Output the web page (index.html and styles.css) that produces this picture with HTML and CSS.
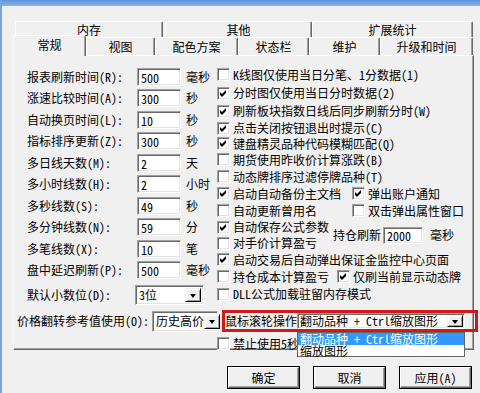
FILE: index.html
```html
<!DOCTYPE html>
<html lang="zh-CN">
<head>
  <meta charset="UTF-8">
  <title>系统设置</title>
  <link rel="stylesheet" href="styles.css">
</head>
<body>
  <div class="window">
    <div class="titlebar"></div>
    <div class="dialog">
      <div class="tabs">
        <div class="tabrow back">
          <div class="tab t-mem">内存</div>
          <div class="tab t-other">其他</div>
          <div class="tab t-ext">扩展统计</div>
        </div>
        <div class="tabrow front">
          <div class="tab active t-gen">常规</div>
          <div class="tab t-view">视图</div>
          <div class="tab t-color">配色方案</div>
          <div class="tab t-status">状态栏</div>
          <div class="tab t-maint">维护</div>
          <div class="tab t-upg">升级和时间</div>
        </div>
      </div>

      <div class="panel">
        <div class="cols">
          <div class="left">
            <div class="field"><span class="lbl">报表刷新时间(R):</span><span class="input">500</span><span class="unit">毫秒</span></div>
            <div class="field"><span class="lbl">涨速比较时间(A):</span><span class="input">300</span><span class="unit">秒</span></div>
            <div class="field"><span class="lbl">自动换页时间(L):</span><span class="input">10</span><span class="unit">秒</span></div>
            <div class="field"><span class="lbl">指标排序更新(Z):</span><span class="input">300</span><span class="unit">秒</span></div>
            <div class="field"><span class="lbl">多日线天数(M):</span><span class="input">2</span><span class="unit">天</span></div>
            <div class="field"><span class="lbl">多小时线数(H):</span><span class="input">2</span><span class="unit">小时</span></div>
            <div class="field"><span class="lbl">多秒线数(S):</span><span class="input">49</span><span class="unit">秒</span></div>
            <div class="field"><span class="lbl">多分钟线数(N):</span><span class="input">59</span><span class="unit">分</span></div>
            <div class="field"><span class="lbl">多笔线数(X):</span><span class="input">10</span><span class="unit">笔</span></div>
            <div class="field"><span class="lbl">盘中延迟刷新(P):</span><span class="input">500</span><span class="unit">毫秒</span></div>
            <div class="field decimals">
              <span class="lbl short">默认小数位(D):</span>
              <span class="combo c-dec"><span class="val">3位</span><span class="drop"></span></span>
            </div>
          </div>

          <div class="right">
            <div class="chk h19"><span class="box"></span>K线图仅使用当日分笔、1分数据(1)</div>
            <div class="chk h18"><span class="box"><svg viewBox="0 0 11 11"><polygon points="2,4 4,6 8,2 8,5 4,9 2,7"/></svg></span>分时图仅使用当日分时数据(2)</div>
            <div class="chk h18"><span class="box"><svg viewBox="0 0 11 11"><polygon points="2,4 4,6 8,2 8,5 4,9 2,7"/></svg></span>刷新板块指数日线后同步刷新分时(W)</div>
            <div class="chk h16"><span class="box"><svg viewBox="0 0 11 11"><polygon points="2,4 4,6 8,2 8,5 4,9 2,7"/></svg></span>点击关闭按钮退出时提示(C)</div>
            <div class="chk h15"><span class="box"><svg viewBox="0 0 11 11"><polygon points="2,4 4,6 8,2 8,5 4,9 2,7"/></svg></span>键盘精灵品种代码模糊匹配(Q)</div>
            <div class="chk"><span class="box"></span>期货使用昨收价计算涨跌(B)</div>
            <div class="chk"><span class="box"></span>动态牌排序过滤停牌品种(T)</div>
            <div class="pair">
              <div class="chk first"><span class="box"><svg viewBox="0 0 11 11"><polygon points="2,4 4,6 8,2 8,5 4,9 2,7"/></svg></span>启动自动备份主文档</div>
              <div class="chk"><span class="box"><svg viewBox="0 0 11 11"><polygon points="2,4 4,6 8,2 8,5 4,9 2,7"/></svg></span>弹出账户通知</div>
            </div>
            <div class="pair">
              <div class="chk first"><span class="box"></span>自动更新曾用名</div>
              <div class="chk"><span class="box"></span>双击弹出属性窗口</div>
            </div>
            <div class="group">
              <div class="sub">
                <div class="chk h16"><span class="box"><svg viewBox="0 0 11 11"><polygon points="2,4 4,6 8,2 8,5 4,9 2,7"/></svg></span>自动保存公式参数</div>
                <div class="chk h16"><span class="box"></span>对手价计算盈亏</div>
              </div>
              <div class="refresh">
                <span>持仓刷新</span><span class="input small">2000</span><span class="unit2">毫秒</span>
              </div>
            </div>
            <div class="chk"><span class="box"><svg viewBox="0 0 11 11"><polygon points="2,4 4,6 8,2 8,5 4,9 2,7"/></svg></span>启动交易后自动弹出保证金监控中心页面</div>
            <div class="pair h18">
              <div class="chk first narrow"><span class="box"></span>持仓成本计算盈亏</div>
              <div class="chk"><span class="box"><svg viewBox="0 0 11 11"><polygon points="2,4 4,6 8,2 8,5 4,9 2,7"/></svg></span>仅刷当前显示动态牌</div>
            </div>
            <div class="chk h18"><span class="box"></span>DLL公式加载驻留内存模式</div>
          </div>
        </div>

        <div class="wheel-row">
          <span class="lbl wide">价格翻转参考值使用(O):</span>
          <span class="combo c-price"><span class="val">历史高价</span><span class="drop"></span></span>
          <div class="mark">
            <span class="wheel-lbl">鼠标滚轮操作:</span>
            <span class="combo c-wheel"><span class="val">翻动品种 + Ctrl缩放图形</span><span class="drop"></span></span>
            <div class="droplist">
              <div class="item sel">翻动品种 + Ctrl缩放图形</div>
              <div class="item">缩放图形</div>
            </div>
          </div>
        </div>

        <div class="ban-row">
          <div class="chk"><span class="box"></span>禁止使用5秒</div>
        </div>
      </div>

      <div class="buttons">
        <button class="btn">确定</button>
        <button class="btn">取消</button>
        <button class="btn">应用(A)</button>
      </div>
    </div>
  </div>
</body>
</html>
```

FILE: styles.css
```css
body {
  margin: 0;
  background: #f0f0f0;
  color: #000;
  font-family: "Noto Sans Mono CJK SC", "Noto Sans CJK SC", sans-serif;
  font-size: 12px;
  line-height: 12px;
}
.window {
  border-left: 2px solid #75a4e2;
  height: 393px;
  box-sizing: border-box;
  overflow: hidden;
}
.titlebar {
  height: 6px;
  background: linear-gradient(#5d93dc, #8ab3ea);
}
.dialog {
  padding-left: 11px;
}

/* tabs */
.tabs {
  margin-top: 15px;
  width: 461px;
}
.tabrow {
  display: flex;
}
.tab {
  box-sizing: border-box;
  background: #f0f0f0;
  border-top: 1px solid #fff;
  border-left: 1px solid #fff;
  border-right: 1px solid #696969;
  box-shadow: inset -1px 0 #a0a0a0;
  border-radius: 2px 2px 0 0;
  display: flex;
  align-items: center;
  justify-content: center;
}
.back {
  margin-left: 2px;
  height: 16px;
}
.back .tab {
  height: 16px;
  padding-top: 1px;
}
.t-mem { width: 148px; margin-right: 2px; }
.t-other { width: 147px; }
.t-ext { width: 161px; }
.front {
  height: 18px;
  position: relative;
}
.front .tab {
  height: 18px;
  padding-top: 1px;
}
.front .active {
  height: 21px;
  margin-top: -2px;
  position: relative;
  z-index: 2;
  padding-bottom: 3px;
}
.t-gen { width: 73px; }
.t-view { width: 69px; }
.t-color { width: 83px; }
.t-status { width: 71px; }
.t-maint { width: 71px; }
.t-upg { width: 93px; }

/* panel */
.panel {
  box-sizing: border-box;
  width: 461px;
  height: 295px;
  border: 1px solid;
  border-color: #fff #696969 #696969 #fff;
  box-shadow: inset -1px -1px #a0a0a0;
  padding: 10px 0 0 3px;
}
.cols {
  display: flex;
}
.left {
  margin-left: 10px;
  width: 190px;
  flex: none;
}
.field {
  height: 21.5px;
  display: flex;
  align-items: center;
}
.lbl {
  width: 110px;
  white-space: nowrap;
  flex: none;
}
.lbl.short {
  width: 108px;
}
.lbl.wide {
  width: 135px;
}
.input {
  box-sizing: border-box;
  width: 44px;
  height: 18px;
  background: #fff;
  border: 1px solid;
  border-color: #a0a0a0 #fff #fff #a0a0a0;
  box-shadow: inset 1px 1px #696969, inset -1px -1px #e3e3e3;
  padding: 3px 0 0 3px;
  flex: none;
}
.input.small {
  width: 40px;
  height: 17px;
  padding-top: 2px;
  margin-left: 2px;
}
.unit {
  margin-left: 5px;
  white-space: nowrap;
}
.decimals {
  margin-top: 3px;
  height: 22px;
}

/* combo boxes */
.combo {
  box-sizing: border-box;
  background: #fff;
  border: 1px solid;
  border-color: #a0a0a0 #fff #fff #a0a0a0;
  box-shadow: inset 1px 1px #696969, inset -1px -1px #e3e3e3;
  display: flex;
  align-items: center;
  justify-content: space-between;
  padding: 2px;
  flex: none;
}
.combo .val {
  padding-left: 1px;
  white-space: nowrap;
}
.drop {
  box-sizing: border-box;
  width: 16px;
  height: 100%;
  background: #f0f0f0;
  border: 1px solid;
  border-color: #f0f0f0 #000 #000 #f0f0f0;
  box-shadow: inset 1px 1px #fff, inset -1px -1px #a0a0a0;
  position: relative;
  flex: none;
}
.drop::after {
  content: "";
  position: absolute;
  left: 4px;
  top: 5px;
  border-left: 3.5px solid transparent;
  border-right: 3.5px solid transparent;
  border-top: 4px solid #000;
}
.c-dec {
  width: 69px;
  height: 20px;
}
.c-price {
  width: 66px;
  height: 21px;
}
.c-wheel {
  width: 168px;
  height: 16px;
  padding: 1px;
  position: relative;
  z-index: 1;
}
.c-wheel .drop::after {
  top: 4px;
}

/* checkboxes */
.right {
  margin-top: -1px;
}
.chk {
  height: 17px;
  display: flex;
  align-items: center;
  white-space: nowrap;
}
.h19 { height: 19px; }
.h18 { height: 18px; }
.h16 { height: 16px; }
.h15 { height: 15px; }
.box {
  box-sizing: border-box;
  width: 13px;
  height: 13px;
  margin-right: 3px;
  background: #fff;
  border: 1px solid;
  border-color: #a0a0a0 #fff #fff #a0a0a0;
  box-shadow: inset 1px 1px #696969, inset -1px -1px #e3e3e3;
  flex: none;
}
.box svg {
  display: block;
  width: 11px;
  height: 11px;
}
.box polygon {
  fill: #000;
}
.pair {
  display: flex;
  height: 17px;
}
.pair .first {
  width: 135px;
  flex: none;
}
.pair .first.narrow {
  width: 120px;
}
.pair .chk {
  height: 100%;
}
.group {
  display: flex;
  align-items: center;
}
.sub {
  width: 116px;
  flex: none;
}
.refresh {
  display: flex;
  align-items: center;
}
.unit2 {
  margin-left: 7px;
}

/* wheel / price row */
.wheel-row {
  margin-top: 3px;
  height: 24px;
  display: flex;
  align-items: center;
}
.mark {
  position: relative;
  margin-left: 4px;
  width: 256px;
  height: 22px;
  box-sizing: border-box;
  border: 3px solid #d11919;
  display: flex;
  align-items: center;
  flex: none;
}
.wheel-lbl {
  width: 72px;
  white-space: nowrap;
  flex: none;
}
.droplist {
  position: absolute;
  left: 72px;
  top: 19px;
  width: 168px;
  box-sizing: border-box;
  background: #fff;
  border: 1px solid #646464;
  z-index: 3;
}
.item {
  height: 11.5px;
  line-height: 11px;
  padding-left: 2px;
  white-space: nowrap;
}
.item.sel {
  background: #3399ff;
  color: #fff;
}

.ban-row {
  margin: 3px 0 0 200px;
}
.ban-row .chk {
  height: 15px;
}

/* buttons */
.buttons {
  margin-top: 17px;
  padding-left: 215px;
  display: flex;
  gap: 15px;
}
.btn {
  box-sizing: border-box;
  width: 71px;
  height: 21px;
  font: inherit;
  background: #f0f0f0;
  border: 1px solid;
  border-color: #fff #696969 #696969 #fff;
  box-shadow: inset -1px -1px #a0a0a0, 0 0 0 1px #000;
  padding: 0;
}
```
